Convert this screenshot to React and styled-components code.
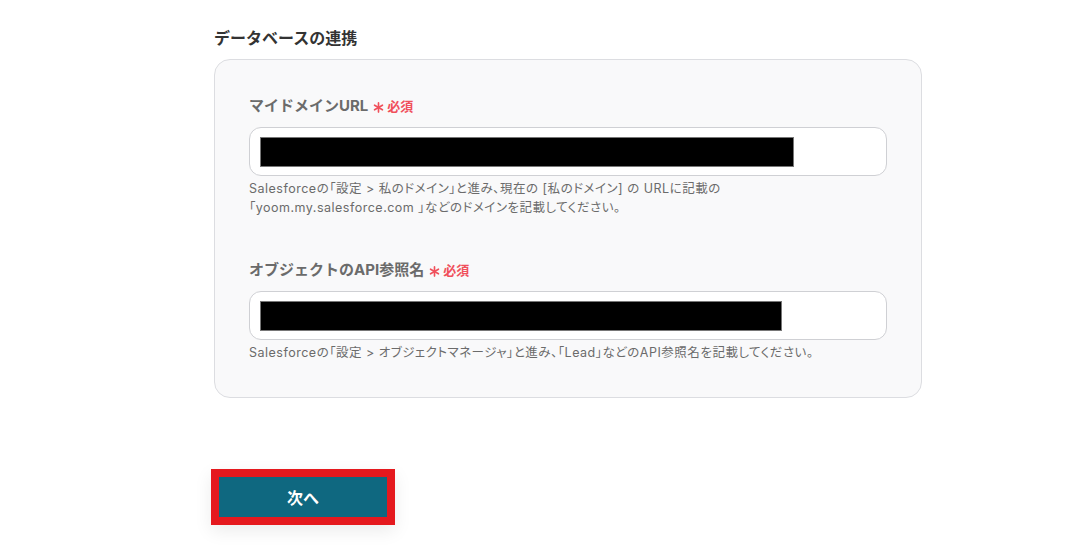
import React from 'react';
import styled, { createGlobalStyle } from 'styled-components';

const GlobalStyle = createGlobalStyle`
  html, body {
    margin: 0;
    padding: 0;
    background: #ffffff;
  }
  body {
    font-family: Inter, "Noto Sans CJK JP", sans-serif;
    color: #333;
  }
`;

const Page = styled.main`
  width: 708px;
  margin-left: 214px;
  padding: 27px 0 40px;
`;

const Title = styled.h2`
  margin: 0 0 10px;
  font-size: 16px;
  font-weight: 700;
  line-height: 22px;
  color: #333;
`;

const Card = styled.section`
  box-sizing: border-box;
  background: #f9f9fa;
  border: 1px solid #dcdde1;
  border-radius: 16px;
  padding: 35px 34px 35px;
  display: flex;
  flex-direction: column;
  gap: 42px;
`;

const Field = styled.div`
  display: flex;
  flex-direction: column;
`;

const Label = styled.div`
  display: flex;
  align-items: center;
  gap: 5px;
  font-size: 15px;
  font-weight: 700;
  line-height: 22px;
  color: #6b6b6b;
  margin-bottom: 10px;
`;

const Required = styled.span`
  display: inline-flex;
  align-items: center;
  gap: 3px;
  color: #f0505b;
  font-size: 13px;
  font-weight: 700;
`;

const InputBox = styled.div`
  box-sizing: border-box;
  height: 49px;
  background: #fff;
  border: 1px solid #cfd0d4;
  border-radius: 12px;
  padding: 9px 10px;
  display: flex;
  align-items: center;
`;

const Redacted = styled.div`
  box-sizing: border-box;
  height: 30px;
  width: ${(p) => p.$w}px;
  background: #000;
  border: 1px solid #777;
`;

const Help = styled.p`
  margin: 3px 0 0;
  font-size: 12.5px;
  line-height: 19px;
  letter-spacing: 0.5px;
  color: #6b6b6b;
  font-feature-settings: "palt";
`;

const Footer = styled.div`
  margin-top: 79px;
`;

const NextButton = styled.button`
  width: 168px;
  height: 40px;
  margin-left: 5px;
  border: none;
  background: #0f6880;
  color: #fff;
  font-family: Inter, "Noto Sans CJK JP", sans-serif;
  font-size: 16px;
  font-weight: 700;
  outline: 8px solid #e5191e;
  box-shadow: 0 6px 18px 8px rgba(0, 0, 0, 0.08);
  cursor: pointer;
`;

const Asterisk = () => (
  <svg width="11" height="11" viewBox="0 0 12 12" style={{ marginTop: 3 }}>
    <g stroke="#f0505b" strokeWidth="1.8" strokeLinecap="round">
      <line x1="6" y1="1" x2="6" y2="11" />
      <line x1="1.7" y1="3.5" x2="10.3" y2="8.5" />
      <line x1="1.7" y1="8.5" x2="10.3" y2="3.5" />
    </g>
  </svg>
);

export default function App() {
  return (
    <>
      <GlobalStyle />
      <Page>
        <Title>データベースの連携</Title>
        <Card>
          <Field>
            <Label>
              マイドメインURL
              <Required>
                <Asterisk />
                必須
              </Required>
            </Label>
            <InputBox>
              <Redacted $w={534} />
            </InputBox>
            <Help>
              Salesforceの「設定 &gt; 私のドメイン」と進み、現在の [私のドメイン] の URLに記載の
              <br />
              「yoom.my.salesforce.com 」などのドメインを記載してください。
            </Help>
          </Field>
          <Field>
            <Label>
              オブジェクトのAPI参照名
              <Required>
                <Asterisk />
                必須
              </Required>
            </Label>
            <InputBox>
              <Redacted $w={522} />
            </InputBox>
            <Help>
              Salesforceの「設定 &gt; オブジェクトマネージャ」と進み、「Lead」などのAPI参照名を記載してください。
            </Help>
          </Field>
        </Card>
        <Footer>
          <NextButton>次へ</NextButton>
        </Footer>
      </Page>
    </>
  );
}
